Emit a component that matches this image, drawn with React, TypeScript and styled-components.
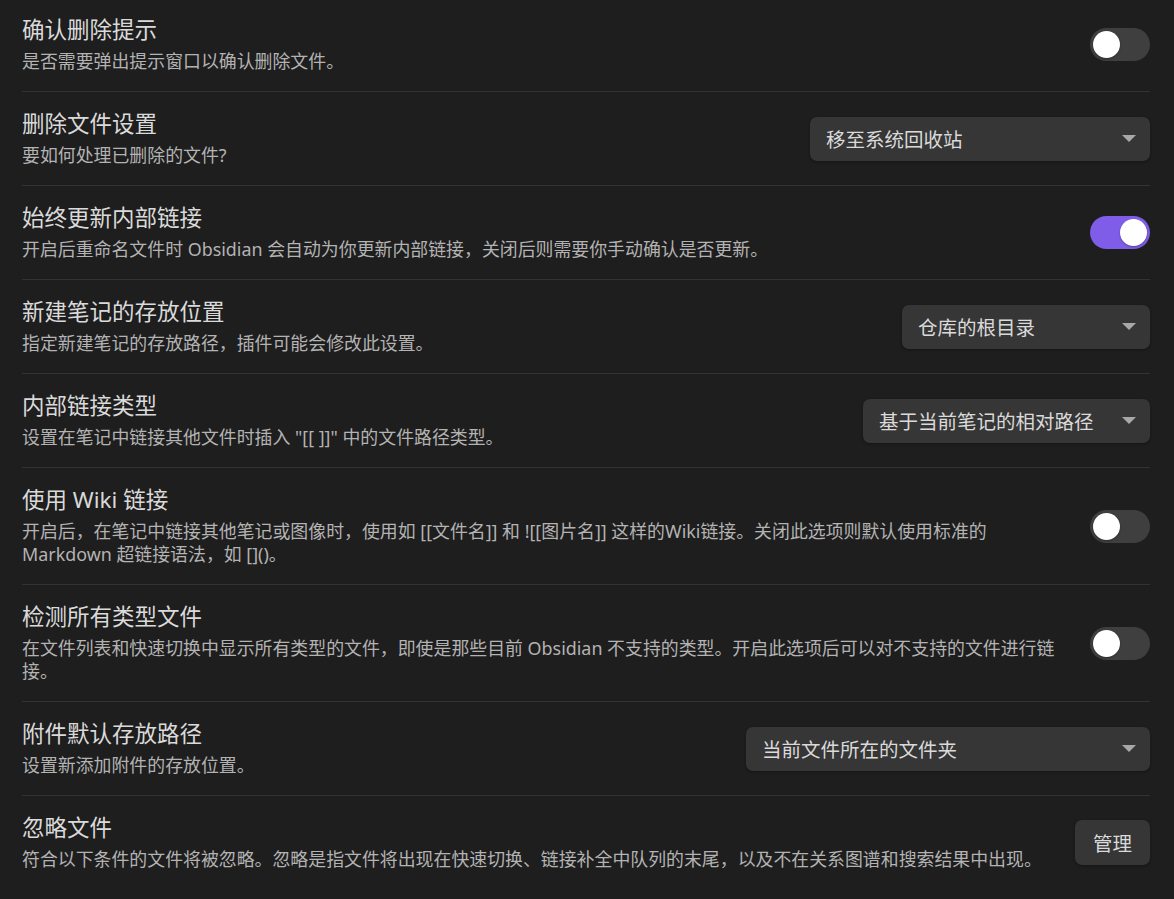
import React, {useState} from "react";
import styled, {createGlobalStyle} from "styled-components";

const GlobalStyle = createGlobalStyle`
  html, body {
    margin: 0;
    padding: 0;
    background: #1e1e1e;
  }

  body {
    font-family: "Noto Sans", "Noto Sans CJK SC", sans-serif;
    color: #dadada;
  }
`

type Control =
    | {kind: "toggle"; on: boolean}
    | {kind: "select"; value: string; width: number}
    | {kind: "button"; label: string};

type SettingProps = {
    name: string;
    desc: string;
    control: Control;
}

const settings: SettingProps[] = [
    {name: "确认删除提示", desc: "是否需要弹出提示窗口以确认删除文件。", control: {kind: "toggle", on: false}},
    {name: "删除文件设置", desc: "要如何处理已删除的文件?", control: {kind: "select", value: "移至系统回收站", width: 340}},
    {
        name: "始终更新内部链接",
        desc: "开启后重命名文件时 Obsidian 会自动为你更新内部链接，关闭后则需要你手动确认是否更新。",
        control: {kind: "toggle", on: true}
    },
    {
        name: "新建笔记的存放位置",
        desc: "指定新建笔记的存放路径，插件可能会修改此设置。",
        control: {kind: "select", value: "仓库的根目录", width: 248}
    },
    {
        name: "内部链接类型",
        desc: "设置在笔记中链接其他文件时插入 \"[[ ]]\" 中的文件路径类型。",
        control: {kind: "select", value: "基于当前笔记的相对路径", width: 287}
    },
    {
        name: "使用 Wiki 链接",
        desc: "开启后，在笔记中链接其他笔记或图像时，使用如 [[文件名]] 和 ![[图片名]] 这样的Wiki链接。关闭此选项则默认使用标准的 Markdown 超链接语法，如 []()。",
        control: {kind: "toggle", on: false}
    },
    {
        name: "检测所有类型文件",
        desc: "在文件列表和快速切换中显示所有类型的文件，即使是那些目前 Obsidian 不支持的类型。开启此选项后可以对不支持的文件进行链接。",
        control: {kind: "toggle", on: false}
    },
    {
        name: "附件默认存放路径",
        desc: "设置新添加附件的存放位置。",
        control: {kind: "select", value: "当前文件所在的文件夹", width: 404}
    },
    {
        name: "忽略文件",
        desc: "符合以下条件的文件将被忽略。忽略是指文件将出现在快速切换、链接补全中队列的末尾，以及不在关系图谱和搜索结果中出现。",
        control: {kind: "button", label: "管理"}
    },
];

const Toggle = ({initial}: {initial: boolean}) => {
    const [on, setOn] = useState(initial);
    return <ToggleTrack $on={on} onClick={() => setOn(!on)}>
        <ToggleKnob $on={on}/>
    </ToggleTrack>
}

const SettingItem = (props: SettingProps) => {
    const {name, desc, control} = props;
    return <Item>
        <Info>
            <Name>{name}</Name>
            <Desc>{desc}</Desc>
        </Info>
        <ControlSlot>
            {control.kind === "toggle" && <Toggle initial={control.on}/>}
            {control.kind === "select" && <Dropdown $width={control.width}>
                <span>{control.value}</span>
                <Caret/>
            </Dropdown>}
            {control.kind === "button" && <Button>{control.label}</Button>}
        </ControlSlot>
    </Item>
}

export default function App() {
    return <>
        <GlobalStyle/>
        <Page>
            {settings.map(s => <SettingItem key={s.name} {...s}/>)}
        </Page>
    </>
}

const Page = styled.div`
  padding: 0 24px 0 22px;
  margin-top: -3px;
`

const Item = styled.div`
  display: flex;
  align-items: center;
  gap: 22px;
  padding: 18px 0;
  border-top: 1px solid #333;

  &:first-child {
    border-top-color: transparent;
  }
`

const Info = styled.div`
  flex: 1 1 auto;
  min-width: 0;
`

const Name = styled.div`
  font-size: 22.5px;
  line-height: 28px;
  color: #dadada;
`

const Desc = styled.div`
  padding-top: 6px;
  font-size: 17.9px;
  line-height: 23px;
  color: #b3b3b3;
`

const ControlSlot = styled.div`
  flex: 0 0 auto;
  display: flex;
  justify-content: flex-end;
`

const ToggleTrack = styled.div<{$on: boolean}>`
  width: 60px;
  height: 33px;
  border-radius: 17px;
  background: ${p => p.$on ? "#7f5de8" : "#3f3f3f"};
  position: relative;
  cursor: pointer;
`

const ToggleKnob = styled.div<{$on: boolean}>`
  position: absolute;
  top: 3px;
  left: ${p => p.$on ? "30px" : "3px"};
  width: 27px;
  height: 27px;
  border-radius: 50%;
  background: #fff;
  box-shadow: 0 1px 2px rgba(0, 0, 0, 0.3);
`

const Dropdown = styled.div<{$width: number}>`
  display: flex;
  align-items: center;
  width: ${p => p.$width}px;
  height: 44px;
  box-sizing: border-box;
  padding: 0 14px 0 16px;
  border-radius: 7px;
  background: #363636;
  box-shadow: 0 1px 3px rgba(0, 0, 0, 0.35);
  font-size: 19.5px;
  color: #dadada;
  cursor: pointer;
`

const Caret = styled.div`
  margin-left: auto;
  width: 0;
  height: 0;
  border-left: 7px solid transparent;
  border-right: 7px solid transparent;
  border-top: 7px solid #a8a8a8;
`

const Button = styled.button`
  height: 45px;
  padding: 0 18px;
  border: 0;
  border-radius: 7px;
  background: #363636;
  box-shadow: 0 1px 3px rgba(0, 0, 0, 0.35);
  font-family: "Noto Sans", "Noto Sans CJK SC", sans-serif;
  font-size: 19.5px;
  color: #dadada;
  cursor: pointer;
`
